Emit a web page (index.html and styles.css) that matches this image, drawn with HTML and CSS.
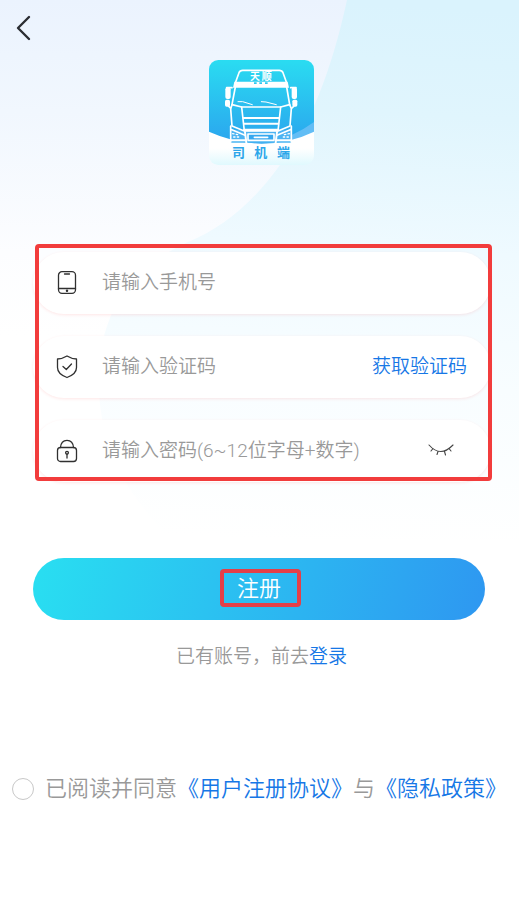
FILE: index.html
```html
<!DOCTYPE html>
<html lang="zh-CN">
<head>
  <meta charset="UTF-8">
  <meta name="viewport" content="width=device-width, initial-scale=1.0">
  <title>注册</title>
  <link rel="stylesheet" href="styles.css">
</head>
<body>

  <svg class="backdrop" viewBox="0 0 519 560" preserveAspectRatio="none" aria-hidden="true">
    <defs>
      <linearGradient id="bgLeft" x1="0" y1="0" x2="0" y2="1">
        <stop offset="0" stop-color="#ebf3fe"/>
        <stop offset="0.2" stop-color="#f1f7fe"/>
        <stop offset="0.45" stop-color="#fcfdff"/>
        <stop offset="0.6" stop-color="#ffffff"/>
      </linearGradient>
      <linearGradient id="bgRight" gradientUnits="userSpaceOnUse" x1="300" y1="0" x2="270" y2="540">
        <stop offset="0" stop-color="#daf3fd"/>
        <stop offset="0.2" stop-color="#e0f5fd"/>
        <stop offset="0.45" stop-color="#effaff"/>
        <stop offset="0.7" stop-color="#f8fdff"/>
        <stop offset="1" stop-color="#ffffff"/>
      </linearGradient>
    </defs>
    <rect width="519" height="560" fill="url(#bgLeft)"/>
    <path d="M347 0C331 73 310 125 280 165C252 204 222 228 188 242C145 262 121 288 110 318C97 350 97 385 101 412C108 465 135 500 170 540H519V0Z" fill="url(#bgRight)"/>
  </svg>

  <header class="topbar">
    <button type="button" class="back" aria-label="返回">
      <svg width="20" height="28" viewBox="0 0 20 28" fill="none" stroke="#2b2d33" stroke-width="2.4" stroke-linecap="round" stroke-linejoin="round">
        <path d="M15 3L4 14L15 25"/>
      </svg>
    </button>
  </header>

  <main class="page">
    <svg class="logo" viewBox="27 30 315 315" role="img" aria-label="天顺司机端">
      <defs>
        <linearGradient id="logoBlue" x1="0" y1="0" x2="0" y2="1">
          <stop offset="0" stop-color="#2adcf1"/>
          <stop offset="1" stop-color="#2ba4ee"/>
        </linearGradient>
        <linearGradient id="logoWhite" x1="0" y1="0" x2="0" y2="1">
          <stop offset="0.5" stop-color="#ffffff"/>
          <stop offset="1" stop-color="#e0f9fe"/>
        </linearGradient>
        <clipPath id="logoClip"><rect x="27" y="30" width="315" height="315" rx="28"/></clipPath>
      </defs>
      <g clip-path="url(#logoClip)">
        <rect x="27" y="30" width="315" height="253" fill="url(#logoBlue)"/>
        <path d="M200 282Q285 258 342 216V260Z" fill="#62bdf5"/>
        <path d="M27 245Q105 280 185 281Q270 280 342 245V345H27Z" fill="url(#logoWhite)"/>
      </g>
      <path d="M90 240H276V278H90Z" fill="#4bb4f2"/>
      <g fill="none" stroke="#fff" stroke-width="5" stroke-linejoin="round" stroke-linecap="round">
        <path d="M107 96L117 68Q120 61 128 61H238Q246 61 249 68L259 96"/>
        <path d="M106 111L96 164L125 171H242L269 164L260 111"/>
        <path d="M96 164L92 176L96 228L131 242"/>
        <path d="M269 164L274 176L270 228L236 242"/>
        <path d="M125 171L133 243H234L242 171"/>
        <path d="M131 204H236M132 221H235" stroke-width="6"/>
        <path d="M133 240H234" stroke-width="8"/>
        <path d="M92 228V277M274 228V277M92 238L135 256M274 238L231 256"/>
        <path d="M144 252H222V271H144Z" fill="#36a8ef"/>
        <path d="M135 246L139 278M231 246L227 278" stroke-width="6"/>
        <path d="M114 155L128 155L157 164M184 155L198 156L229 164" stroke-width="3"/>
        <path d="M96 113H80M272 113H288"/>
        <path d="M86 169L92 174M281 169L276 174"/>
        <path d="M98 251L118 255M101 261L122 261M268 251L248 255M265 261L244 261" stroke-width="4" stroke-dasharray="4 7"/>
        <path d="M93 271H137M229 271H273" stroke-width="6"/>
        <path d="M163 262H203"/>
      </g>
      <path d="M103 95H263L267 113H99Z" fill="#fff"/>
      <path d="M162 97h8v5h-8zM178 97h8v5h-8zM195 97h8v5h-8z" fill="#2cc9f0"/>
      <g fill="#fff">
        <rect x="76" y="112" width="16" height="35" rx="6"/>
        <rect x="75" y="149" width="15" height="21" rx="5"/>
        <rect x="275" y="112" width="16" height="35" rx="6"/>
        <rect x="277" y="149" width="15" height="21" rx="5"/>
      </g>
      <text class="logo-brand" x="150 185" y="90">天顺</text>
      <text class="logo-role" x="96 163 231" y="322">司机端</text>
    </svg>

    <form class="register">
      <div class="fields">
        <div class="field">
          <label for="phone" aria-label="手机号">
            <svg class="icon" viewBox="0 0 24 26">
              <rect x="3.500" y="1.700" width="17" height="21.600" rx="3.500"/>
              <path d="M3.500 18.500H20.500M9.500 4H14.500"/>
              <circle cx="12" cy="20.800" r="0.600" fill="#303030"/>
            </svg>
          </label>
          <input type="tel" id="phone" placeholder="请输入手机号">
        </div>

        <div class="field">
          <label for="code" aria-label="验证码">
            <svg class="icon" viewBox="0 0 24 26">
              <path d="M12 2Q7 5 2.500 5V13.500Q2.500 20 12 23.500Q21.500 20 21.500 13.500V5Q17 5 12 2Z"/>
              <path d="M8 12.500L11.300 15.500L16.500 10"/>
            </svg>
          </label>
          <input type="text" id="code" placeholder="请输入验证码">
          <button type="button" class="get-code">获取验证码</button>
        </div>

        <div class="field">
          <label for="password" aria-label="密码">
            <svg class="icon" viewBox="0 0 24 26">
              <rect x="2.500" y="9.500" width="19" height="14" rx="3"/>
              <path d="M5.500 9.500Q6 2.300 12 2.300Q18 2.300 18.500 9.500"/>
              <circle cx="12" cy="14.800" r="1.400"/>
              <path d="M12 16.200V20"/>
            </svg>
          </label>
          <input type="password" id="password" placeholder="请输入密码(6~12位字母+数字)">
          <button type="button" class="toggle" aria-label="显示密码">
            <svg width="26" height="16" viewBox="0 0 26 16" fill="none" stroke="#444" stroke-width="1.100" stroke-linecap="round">
              <path d="M1 2Q12.500 15 25 2M5 5.500L3 8M10 8.500L9 11.500M16.500 8.500L17.500 12M21 5.500L23 8"/>
            </svg>
          </button>
        </div>
      </div>

      <button type="submit" class="submit"><span class="submit-text">注册</span></button>
    </form>

    <p class="login">已有账号，前去<a href="#">登录</a></p>

    <div class="agreement">
      <input type="radio" id="agree">
      <label for="agree">已阅读并同意</label><a href="#">《用户注册协议》</a>与<a href="#">《隐私政策》</a>
    </div>
  </main>

</body>
</html>
```

FILE: styles.css
```css
* {
  box-sizing: border-box;
}

body {
  margin: 0;
  min-height: 100vh;
  background: #fff;
  color: #999;
  font-family: Roboto, "Noto Sans CJK SC", sans-serif;
  font-size: 19px;
  font-weight: 350;
  line-height: 28px;
}

button {
  padding: 0;
  border: none;
  background: none;
  font: inherit;
  cursor: pointer;
}

a {
  color: #1677e6;
  text-decoration: none;
}

.backdrop {
  position: absolute;
  top: 0;
  left: 0;
  z-index: -1;
  width: 100%;
  height: 560px;
}

.topbar {
  display: flex;
  align-items: center;
  height: 56px;
  padding-left: 14px;
}

.back,
.toggle {
  display: flex;
}

.page {
  display: flex;
  flex-direction: column;
  padding-top: 4px;
}

.logo {
  align-self: center;
  width: 105px;
  height: 105px;
  margin-left: 4px;
}

.logo-brand {
  font-size: 30px;
  font-weight: bold;
  fill: #fff;
}

.logo-role {
  font-size: 39px;
  font-weight: bold;
  fill: #2ca6ea;
}

.register {
  margin-top: 79px;
  padding: 0 28px 0 33px;
}

/* red frame drawn round the inputs */
.fields {
  position: relative;
  display: flex;
  flex-direction: column;
  gap: 22px;
  padding-top: 8px;
}

.fields::after {
  content: "";
  position: absolute;
  inset: 0 -1px 1px 2px;
  border: 4px solid #f23c3c;
  border-radius: 4px;
  pointer-events: none;
}

.field {
  display: flex;
  align-items: center;
  height: 62px;
  padding: 0 24px 0 22px;
  border-radius: 31px;
  background: #fff;
  box-shadow: 0 1px 3px rgba(255, 60, 60, 0.12);
}

.field label {
  display: flex;
}

.icon {
  width: 24px;
  height: 26px;
  fill: none;
  stroke: #303030;
  stroke-width: 1.3px;
  stroke-linecap: round;
  stroke-linejoin: round;
}

.field input {
  flex: 1;
  min-width: 0;
  margin-left: 23px;
  padding: 0;
  border: none;
  outline: none;
  background: none;
  color: #333;
  font: inherit;
}

.field input::placeholder {
  color: #999;
}

.get-code {
  color: #1677e6;
}

.toggle {
  margin-right: 13px;
}

.submit {
  display: block;
  width: calc(100% - 6px);
  height: 62px;
  margin-top: 76px;
  border-radius: 31px;
  background: linear-gradient(105deg, #29dff1, #2e97f1);
  color: #fff;
  font-size: 22px;
}

.submit-text {
  position: relative;
}

.submit-text::after {
  content: "";
  position: absolute;
  inset: -7px -20px -6px -17px;
  border: 4px solid #e43f48;
  border-radius: 4px;
}

.login {
  margin: 23px 0 0;
  padding-left: 4px;
  text-align: center;
}

.agreement {
  display: flex;
  align-items: center;
  margin-top: 104px;
  padding-left: 12px;
  font-size: 22px;
  white-space: nowrap;
}

.agreement input {
  appearance: none;
  width: 22px;
  height: 22px;
  margin: 0 11px 0 0;
  border: 1px solid #c8c8c8;
  border-radius: 50%;
  background: #fff;
}

.agreement input:checked {
  border: 6px solid #1677e6;
}
```
